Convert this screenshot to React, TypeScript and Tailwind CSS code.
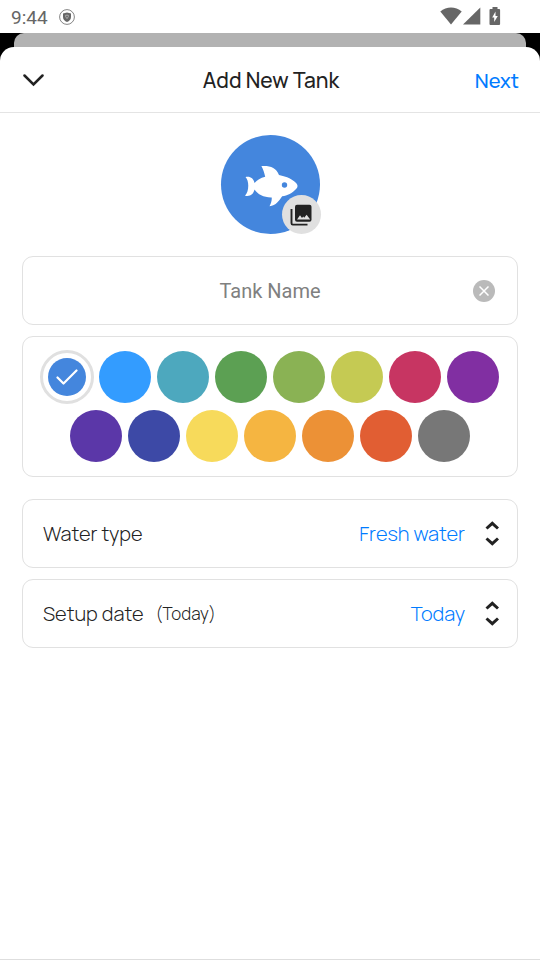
import { useState } from "react";
import clsx from "clsx";

const SWATCHES: { name: string; bg: string }[] = [
  { name: "Blue", bg: "bg-[#4486dd]" },
  { name: "Sky", bg: "bg-[#339cff]" },
  { name: "Teal", bg: "bg-[#4da8be]" },
  { name: "Green", bg: "bg-[#5ca053]" },
  { name: "Olive", bg: "bg-[#8ab254]" },
  { name: "Lime", bg: "bg-[#c5ca53]" },
  { name: "Crimson", bg: "bg-[#c73562]" },
  { name: "Purple", bg: "bg-[#812fa2]" },
  { name: "Violet", bg: "bg-[#5b37a8]" },
  { name: "Indigo", bg: "bg-[#3d49a6]" },
  { name: "Yellow", bg: "bg-[#f7da5b]" },
  { name: "Amber", bg: "bg-[#f5b541]" },
  { name: "Orange", bg: "bg-[#ec9136]" },
  { name: "Red", bg: "bg-[#e15e33]" },
  { name: "Gray", bg: "bg-[#777777]" },
];

const CARD = "rounded-[11px] border border-[#e1e1e1] bg-white";

function StatusBar() {
  return (
    <div className="flex h-[33px] items-center bg-white pl-[11px] pr-[39px] font-[Roboto,sans-serif] text-[#666]">
      <span className="pt-0.5 text-[19px] leading-6">9:44</span>
      <svg className="ml-[11px]" width="16" height="16" viewBox="0 0 16 16" fill="none">
        <circle cx="8" cy="8" r="7.4" stroke="currentColor" strokeWidth="0.8" />
        <path d="M8 3.4 12 4.6V8c0 2.4-1.6 4-4 5-2.4-1-4-2.6-4-5V4.6Z" fill="currentColor" />
        <path d="M6.7 6.2h2.6v1.6L8 9.600 6.700 7.800Z" stroke="#bbb" strokeWidth="0.8" />
      </svg>
      <div className="flex-1" />
      <div className="flex items-center pb-0.5">
        <svg width="22" height="18" viewBox="0 0 22 18" fill="currentColor">
          <path d="M0.3 4.4C6.5-.9 15.5-.9 21.7 4.4L11 17.5Z" />
        </svg>
        <svg className="ml-px" width="18" height="18" viewBox="0 0 18 18" fill="currentColor">
          <path d="M0 17.5 17.3 0.5V17.5Z" />
        </svg>
        <svg className="ml-2" width="12" height="18" viewBox="0 0 12 18">
          <path
            d="M3.5 0h5v2h1.700c.5 0 .9.4.9.9v14.200c0 .5-.4.9-.9.9H1.400c-.5 0-.9-.4-.9-.9V2.900c0-.5.4-.9.9-.9h2.100Z"
            fill="currentColor"
          />
          <path d="M6.5 4.5 3.2 10.5h2v4.5L8.8 9H6.5Z" fill="#fff" />
        </svg>
      </div>
    </div>
  );
}

function FishIcon() {
  return (
    <svg width="58" height="44" viewBox="0 0 58 44">
      <path
        d="M4.500 14C9 13 12.500 15 13.500 20c2.500-3 6-5.300 10.700-6.300-1-4-2-7.500-3.800-10.600 8.300-.6 14.800 1.300 17.600 8.900C46 13.500 52 16.500 55.500 20.500c1.400 1.600 1.400 3.500-.2 5.200-4 4.600-9 6.600-14.100 7.600-2.900 4.200-6.100 9.400-12.700 10 1.700-3.300 2.500-5.900 2.200-8.900C23 34.600 17 31.600 13.500 26.500 12.300 31.500 9 33.800 4 32.700c4-4 4.500-14.500.5-18.700Z"
        fill="#fff"
      />
      <circle cx="43.500" cy="22" r="2.700" fill="#4486dd" />
    </svg>
  );
}

function GalleryIcon() {
  return (
    <svg width="24" height="22" viewBox="0 0 24 22" fill="none">
      <path d="M2.500 5v14.300c0 .8.5 1.300 1.300 1.300H18.500" stroke="#222" strokeWidth="1.900" />
      <rect x="6" y="0.800" width="16.500" height="17" rx="2" fill="#222" />
      <path d="m8 15.500 3-4.200 2 2.600 1.200-1.500 1 1.300 2.400-3 3.600 4.800Z" fill="#e0e0e0" />
    </svg>
  );
}

function UpDownIcon() {
  return (
    <svg
      className="pointer-events-none ml-5 shrink-0"
      width="14"
      height="26"
      viewBox="0 0 14 26"
      fill="none"
      stroke="#222"
      strokeWidth="3"
    >
      <path d="M1.500 7.500 7.300 2.300 13 7.500M1.500 17.500 7.300 22.700 13 17.500" />
    </svg>
  );
}

function ColorPicker({ value, onChange }: { value: string; onChange: (name: string) => void }) {
  return (
    <div
      role="group"
      aria-label="Tank color"
      className={clsx(CARD, "mt-[11px] flex flex-wrap justify-center gap-x-1.5 gap-y-[7px] py-3.5")}
    >
      {SWATCHES.map((s) => {
        const selected = s.name === value;
        return (
          <button
            key={s.name}
            type="button"
            aria-label={s.name}
            aria-pressed={selected}
            onClick={() => onChange(s.name)}
            className={clsx(
              "flex items-center justify-center rounded-full",
              selected ? "-m-px size-[54px] border-[3px] border-[#e0e0e0]" : "size-[52px]",
              !selected && s.bg
            )}
          >
            {selected && (
              <span className={clsx("flex size-[38px] items-center justify-center rounded-full", s.bg)}>
                <svg width="22" height="18" viewBox="0 0 22 18" fill="none">
                  <path
                    d="M1.500 9.500 7.500 15.500 20.500 2.500"
                    stroke="#fff"
                    strokeWidth="2.2"
                    strokeLinecap="round"
                    strokeLinejoin="round"
                  />
                </svg>
              </span>
            )}
          </button>
        );
      })}
    </div>
  );
}

export default function App() {
  const [name, setName] = useState("");
  const [color, setColor] = useState("Blue");
  const [water, setWater] = useState("Fresh water");

  return (
    <div className="flex min-h-screen flex-col bg-black font-[Manrope,Inter,sans-serif] text-[#222]">
      <StatusBar />
      <div className="mx-3.5 h-3.5 rounded-t-[10px] bg-[#b2b2b2]" />
      <main className="flex flex-1 flex-col rounded-t-[14px] border-b border-[#dedede] bg-white">
        <header className="grid h-[66px] grid-cols-[1fr_auto_1fr] items-center border-b border-[#e4e4e4] pl-[23px] pr-[21px]">
          <button type="button" aria-label="Close" className="justify-self-start">
            <svg width="21" height="14" viewBox="0 0 21 14" fill="none">
              <path
                d="M1.500 2.500 10.500 11.500 19.500 2.500"
                stroke="#222"
                strokeWidth="2.5"
                strokeLinecap="round"
              />
            </svg>
          </button>
          <h1 className="pt-0.5 text-[21px] font-[550]">Add New Tank</h1>
          <button type="button" className="justify-self-end pt-0.5 text-xl font-[550] text-[#007bff]">
            Next
          </button>
        </header>

        <div className="px-[22px] pt-[22px]">
          <button
            type="button"
            aria-label="Choose tank photo"
            className="relative mx-auto flex size-[99px] items-center justify-center rounded-full bg-[#4486dd]"
          >
            <FishIcon />
            <span className="absolute -right-px bottom-0 flex size-[39px] items-center justify-center rounded-full bg-[#e0e0e0]">
              <GalleryIcon />
            </span>
          </button>

          <div className={clsx(CARD, "relative mt-[22px] h-[69px]")}>
            <input
              type="text"
              aria-label="Tank Name"
              placeholder="Tank Name"
              value={name}
              onChange={(e) => setName(e.target.value)}
              className="size-full rounded-[11px] px-14 text-center font-[Roboto,sans-serif] text-xl placeholder:text-[#808080]"
            />
            <button
              type="button"
              aria-label="Clear"
              onClick={() => setName("")}
              className="absolute inset-y-0 right-[22px] my-auto flex size-[22px] items-center justify-center rounded-full bg-[#bababa]"
            >
              <svg width="10" height="10" viewBox="0 0 10 10" stroke="#fff" strokeWidth="1.5">
                <path d="M.5.5 9.5 9.5M9.5.5.5 9.5" />
              </svg>
            </button>
          </div>

          <ColorPicker value={color} onChange={setColor} />

          <div className={clsx(CARD, "mt-[22px] flex h-[69px] items-center pl-5 pr-[18px]")}>
            <label htmlFor="water" className="text-xl font-[350]">
              Water type
            </label>
            <select
              id="water"
              value={water}
              onChange={(e) => setWater(e.target.value)}
              className="ml-auto appearance-none bg-transparent text-right text-xl font-[350] text-[#007bff] [text-align-last:right]"
            >
              <option>Fresh water</option>
              <option>Salt water</option>
            </select>
            <UpDownIcon />
          </div>

          <div className={clsx(CARD, "mt-[11px] flex h-[69px] items-center pl-5 pr-[18px]")}>
            <span id="setup" className="text-xl font-[350]">
              Setup date
            </span>
            <span className="ml-3 text-[17px] font-light">(Today)</span>
            <button
              type="button"
              aria-describedby="setup"
              className="ml-auto flex items-center text-xl font-[350] text-[#007bff]"
            >
              Today
              <UpDownIcon />
            </button>
          </div>
        </div>
      </main>
    </div>
  );
}
